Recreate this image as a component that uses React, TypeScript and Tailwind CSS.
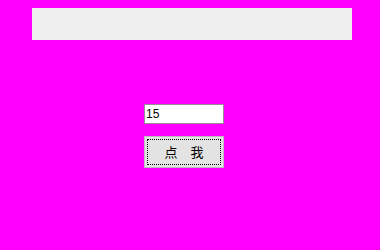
export default function App() {
  return (
    <div className="w-[380px] h-[250px] bg-[#ff00ff] flex flex-col items-start" style={{ fontFamily: '"Liberation Sans", Arial, sans-serif' }}>
      <div className="mt-[8px] ml-[32px] w-[320px] h-[32px] bg-[#f0eff0]" />
      <div className="mt-[64px] ml-[144px] w-[80px] flex flex-col">
        <div className="h-[20px] w-[80px] bg-white border border-[#9a8a9a] flex items-center pl-[1px] text-[12px] text-black leading-none">15</div>
        <div className="mt-[12px] h-[32px] w-[80px] bg-[#e3e3e3] border border-[#bdbdbd] p-[2px]">
          <div className="h-full w-full border border-dotted border-black flex items-center justify-center text-[13px] text-black" style={{ fontFamily: '"Noto Sans CJK SC", sans-serif' }}>
            <span>点</span><span className="ml-[13px]">我</span>
          </div>
        </div>
      </div>
    </div>
  );
}
